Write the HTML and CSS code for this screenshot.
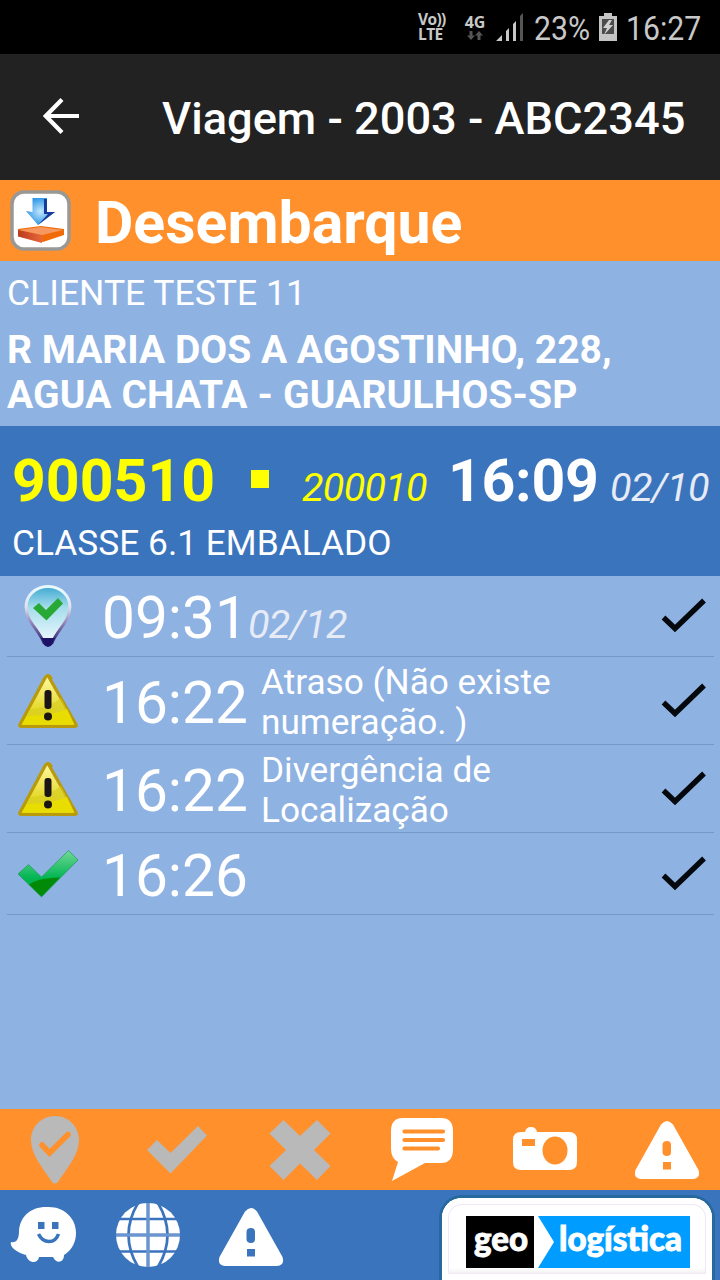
FILE: index.html
```html
<!DOCTYPE html>
<html lang="pt-BR">
<head>
    <meta charset="UTF-8">
    <meta name="viewport" content="width=device-width, initial-scale=1.0">
    <title>Viagem</title>
    <link rel="stylesheet" href="styles.css">
</head>
<body>
    <svg width="0" height="0" class="defs">
        <defs>
            <linearGradient id="yellow" x1="0" y1="0" x2="0" y2="1">
                <stop offset="0" stop-color="#fff9a8"/>
                <stop offset="0.6" stop-color="#e8dc35"/>
                <stop offset="1" stop-color="#e6d800"/>
            </linearGradient>
            <linearGradient id="green" x1="0" y1="0" x2="0" y2="1">
                <stop offset="0" stop-color="#72d896"/>
                <stop offset="0.6" stop-color="#00b552"/>
                <stop offset="1" stop-color="#0aa848"/>
            </linearGradient>
            <linearGradient id="pin" x1="0" y1="0" x2="0" y2="1">
                <stop offset="0" stop-color="#3fa9d0"/>
                <stop offset="0.35" stop-color="#a5dcec"/>
                <stop offset="1" stop-color="#f2fcff"/>
            </linearGradient>
            <linearGradient id="pin-edge" x1="0" y1="0" x2="0" y2="1">
                <stop offset="0" stop-color="#e8fbff"/>
                <stop offset="0.35" stop-color="#e2e0f2"/>
                <stop offset="0.75" stop-color="#6a5a9c"/>
                <stop offset="1" stop-color="#1c1266"/>
            </linearGradient>
            <radialGradient id="arrow">
                <stop offset="0" stop-color="#c4e8fd"/>
                <stop offset="1" stop-color="#3298e6"/>
            </radialGradient>
            <linearGradient id="box" x1="0" y1="0" x2="1" y2="0">
                <stop offset="0" stop-color="#b93c1c"/>
                <stop offset="1" stop-color="#e8663a"/>
            </linearGradient>
            <symbol id="warning" viewBox="0 0 62 56">
                <path d="M31 2.5 L59 51.5 Q60 53.5 57.5 53.5 H4.5 Q2 53.5 3 51.5 L28 5 Q31 0 34 5 Z" fill="url(#yellow)" stroke="#b99a0a" stroke-width="3.2" stroke-linejoin="round"/>
                <path d="M13 36 Q32 35 44 25 L54 44 L56 51 H5 Z" fill="#d5cc20" opacity="0.6"/>
                <path d="M5 51 L10 43 Q34 43 50 36 L57 51 Z" fill="#e9dd00"/>
                <rect x="27.5" y="17" width="7" height="19" rx="3" fill="#1a1412"/>
                <circle cx="31" cy="43.5" r="4" fill="#1a1412"/>
            </symbol>
            <symbol id="tick" viewBox="0 0 46 36">
                <path d="M2.5 19.5 L14 30.5 L43 2.5" fill="none" stroke="#05080c" stroke-width="5.4"/>
            </symbol>
            <symbol id="alert" viewBox="0 0 66 60">
                <path fill-rule="evenodd" fill="#fff" d="M27 4.5 Q33 -2.5 39 4.5 L64.5 50 Q67 58.5 59 59 H7 Q-1 58.5 1.5 50 Z M33 21 Q28.5 21 28.5 25 V32 Q28.5 36 33 36 Q37 36 37 32 V25 Q37 21 33 21 Z M29 42 V49.5 H37 V42 Z"/>
            </symbol>
        </defs>
    </svg>

    <div class="status-bar">
        <div class="volte"><span>Vo))</span><span>LTE</span></div>
        <div class="network">
            <span>4G</span>
            <svg width="16" height="9" viewBox="0 0 16 9" fill="#555"><path d="M2.5 0h3v4.5h2.5L4 9 0 4.5h2.5zM10.5 9h3V4.5H16L12 0 8 4.5h2.5z"/></svg>
        </div>
        <svg class="signal" width="28" height="28" viewBox="0 0 28 28">
            <path fill="#c8c8c8" d="M0 28 L6 22 V28 Z M10 18 L13 15 V28 H10 Z M17 11 L20 8 V28 H17 Z"/>
            <path fill="#555" d="M24 3 L27 0 V28 H24 Z"/>
        </svg>
        <span class="battery-text">23%</span>
        <svg class="battery" width="18" height="28" viewBox="0 0 18 28">
            <path fill="#c4c4c4" d="M5 0h8v3h5v25H0V3h5z"/>
            <path fill="#4b4b4b" d="M3 6h12v15H3z"/>
            <path fill="#d0d0d0" d="M10 7l-6 8h4l-3 7 9-10h-4l3-5z"/>
        </svg>
        <span class="clock">16:27</span>
    </div>

    <header>
        <svg class="back" width="36" height="36" viewBox="0 0 36 36" fill="none" stroke="#fff" stroke-width="4.2"><path d="M36 18H3M19 1.5L2.8 18 19 34.5"/></svg>
        <h1>Viagem - 2003 - ABC2345</h1>
    </header>

    <div class="activity">
        <svg width="62" height="62" viewBox="0 0 62 62">
            <rect x="2" y="2" width="57" height="57" rx="12" fill="#fff" stroke="#9a9894" stroke-width="3.5"/>
            <path d="M8 46 V39 L31 36 L54 39 V45 L33 52 Z" fill="#ee6b08"/>
            <path d="M8 40 L32 45 V53 L8 46.5 Z" fill="url(#box)"/>
            <path d="M9 40 L31 37 L53 40 L32 45 Z" fill="#f79860"/>
            <path d="M22.5 8 H37 V22 H45 L28 35 L16 21 L22.5 22 Z" fill="url(#arrow)"/>
            <path d="M34 9 H37 V22 H45 L28 35 L38 24 H34 Z" fill="#173b9c"/>
        </svg>
        <h2>Desembarque</h2>
    </div>

    <div class="client">
        <div class="client-name">CLIENTE TESTE 11</div>
        <div class="address">R MARIA DOS A AGOSTINHO, 228,<br><span class="city">AGUA CHATA - GUARULHOS-SP</span></div>
    </div>

    <div class="order">
        <div class="order-row">
            <span class="order-number">900510</span>
            <span class="square"></span>
            <span class="order-code">200010</span>
            <span class="order-time">16:09</span>
            <span class="order-date">02/10</span>
        </div>
        <div class="order-class">CLASSE 6.1 EMBALADO</div>
    </div>

    <main>
        <div class="event first">
            <div class="event-icon">
                <svg width="48" height="62" viewBox="0 0 48 62">
                    <path d="M24 1.5 C11 1.5 2 11 2 22 C2 36 15 45 20 58 Q24 63 28 58 C33 45 46 36 46 22 C46 11 37 1.5 24 1.5 Z" fill="url(#pin)" stroke="url(#pin-edge)" stroke-width="2.8"/>
                    <path d="M17 53 H31 L27 59.5 Q24 62.5 21 59.5 Z" fill="#1c1266"/>
                    <path d="M9 23 L15 18 L22 25 L34 13 L39 18.5 L22.5 35.5 Z" fill="#28a935"/>
                </svg>
            </div>
            <div class="event-time">09:31<em>02/12</em></div>
            <svg class="tick" width="46" height="36"><use href="#tick"/></svg>
        </div>
        <div class="event">
            <div class="event-icon"><svg width="62" height="56"><use href="#warning"/></svg></div>
            <div class="event-time">16:22</div>
            <div class="event-text">Atraso (Não existe<br>numeração. )</div>
            <svg class="tick" width="46" height="36"><use href="#tick"/></svg>
        </div>
        <div class="event">
            <div class="event-icon"><svg width="62" height="56"><use href="#warning"/></svg></div>
            <div class="event-time">16:22</div>
            <div class="event-text">Divergência de<br>Localização</div>
            <svg class="tick" width="46" height="36"><use href="#tick"/></svg>
        </div>
        <div class="event last">
            <div class="event-icon">
                <svg width="62" height="48" viewBox="0 0 62 48">
                    <path d="M1 24 L11.5 14.5 L24.5 27 L51.5 0.5 L61 10 L24.5 47 Z" fill="url(#green)" stroke="#2b9a66" stroke-width="0.8"/>
                    <path d="M12 34.5 Q20 28 43 27.5 L24.5 46.5 Z" fill="#008a08"/>
                </svg>
            </div>
            <div class="event-time">16:26</div>
            <svg class="tick" width="46" height="36"><use href="#tick"/></svg>
        </div>
    </main>

    <nav class="actions">
        <svg height="68" viewBox="0 0 48 68">
            <path fill="#b9b9b9" d="M24 0 C10 0 0 11 0 24 C0 39 12 52 21 66 Q24 69 27 66 C36 52 48 39 48 24 C48 11 38 0 24 0 Z"/>
            <path d="M11 29 L18.5 37 L37 18.5" fill="none" stroke="#ff902b" stroke-width="5.5" stroke-linecap="round"/>
        </svg>
        <svg class="check" height="48" viewBox="0 0 60 48" fill="#b9b9b9"><path d="M0 24 L10 14 L23.5 27 L51 0 L60 9.5 L23.5 47.5 Z"/></svg>
        <svg height="62" viewBox="0 0 62 62" fill="#b9b9b9"><path d="M14.5 1 L31 17 L48 1 L61.5 14.5 L45 31 L61.5 47 L48 61 L31 44.5 L14.5 61 L0.5 47 L17 31 L0.5 14.5 Z"/></svg>
        <svg height="64" viewBox="0 0 64 64">
            <path fill="#fff" d="M13 0 H51 Q63 0 63 13 V31 Q63 45 51 45 H35 L2 63 L8 44 Q1 40 1 31 V13 Q1 0 13 0 Z"/>
            <path stroke="#ff902b" stroke-width="4.2" stroke-linecap="round" d="M14.5 13.5H53M14.5 22H53M14.5 30.5H48"/>
        </svg>
        <svg class="camera" height="44" viewBox="0 0 64 44">
            <path fill="#fff" d="M8 5 H12 Q13 0 18 0 Q23 0 24 5 H56 Q64 5 64 13 V35 Q64 43 56 43 H8 Q0 43 0 35 V13 Q0 5 8 5 Z"/>
            <path fill="#ff902b" d="M9 12h13v7H9z"/>
            <ellipse cx="42" cy="23.5" rx="12.5" ry="14" fill="#ff902b"/>
        </svg>
        <svg height="60"><use href="#alert"/></svg>
    </nav>

    <footer>
        <svg class="waze" width="67" height="58" viewBox="0 0 67 58">
            <path fill="#fff" d="M39 1 C20 0 10 11 9 25 C9 34 6 37 1 36 C-1 42 9 47 16 49 C18 58 28 58 29 51 H43 C46 58 54 57 54 49 C62 44 66 36 66 27 C66 12 54 1 39 1 Z"/>
            <path fill="#3a74bd" d="M28 16h6.5v7H28zM42 16h6.5v7H42z"/>
            <path d="M28.5 28 Q32 35.500 39 35.500 Q46 35.500 48.5 28" fill="none" stroke="#3a74bd" stroke-width="3.5"/>
        </svg>
        <svg class="globe" width="64" height="64" viewBox="0 0 64 64">
            <circle cx="32" cy="32" r="32" fill="#fff"/>
            <g fill="none" stroke="#3a74bd" stroke-width="2.7">
                <path d="M3 16H61M3 48.5H61"/>
                <path d="M22 0 Q3 32 22 64 M42 0 Q61 32 42 64"/>
                <path stroke="#6b95d0" stroke-width="3.5" d="M32 0V64M0 32H64"/>
            </g>
        </svg>
        <svg class="alert" width="66" height="60"><use href="#alert"/></svg>
        <div class="logo">
            <svg width="224" height="53" viewBox="0 0 224 53">
                <path fill="#000" d="M0 0h68v52H0z"/>
                <path fill="#009cff" d="M72 0H224V52H72L88 26Z"/>
                <g class="logo-text">
                    <text x="8" y="35" textLength="54" lengthAdjust="spacingAndGlyphs">geo</text>
                    <text x="93" y="35" textLength="123" lengthAdjust="spacingAndGlyphs">logística</text>
                </g>
            </svg>
        </div>
    </footer>
</body>
</html>
```
FILE: styles.css
```css
* {
    box-sizing: border-box;
}
body {
    margin: 0;
    width: 720px;
    height: 1280px;
    overflow: hidden;
    display: flex;
    flex-direction: column;
    font-family: Roboto, sans-serif;
    background-color: #8eb2e2;
    color: #fff;
}
svg {
    display: block;
    flex-shrink: 0;
}
.defs {
    position: absolute;
}
.status-bar {
    height: 54px;
    flex-shrink: 0;
    background-color: #000;
    color: #c8c8c8;
    display: flex;
    align-items: center;
    padding-left: 418px;
}
.volte {
    display: flex;
    flex-direction: column;
    width: 46px;
    font: bold 15.5px/15px "Open Sans", sans-serif;
    letter-spacing: -0.6px;
}
.network {
    display: flex;
    flex-direction: column;
    align-items: center;
    width: 22px;
    font: bold 16px/17px "Open Sans", sans-serif;
}
.signal {
    margin-left: 10px;
}
.battery-text, .clock {
    font-size: 33.5px;
    line-height: 40px;
    padding-top: 3px;
    white-space: nowrap;
    transform: scaleX(0.9);
    transform-origin: left;
}
.battery-text {
    width: 54px;
    margin-left: 10px;
}
.battery {
    margin-left: 11px;
}
.clock {
    margin-left: 9px;
}
header {
    height: 126px;
    flex-shrink: 0;
    background-color: #222;
    display: flex;
    align-items: center;
    padding-left: 43px;
}
.back {
    margin-bottom: 3px;
}
h1 {
    margin: 0 0 0 83px;
    padding-top: 3px;
    font-size: 45.2px;
    font-weight: 500;
    white-space: nowrap;
}
.activity {
    height: 81px;
    flex-shrink: 0;
    background-color: #ff902b;
    display: flex;
    align-items: center;
    padding-left: 10px;
}
h2 {
    margin: 0 0 0 23px;
    padding-top: 4px;
    font-size: 59px;
    font-weight: bold;
}
.client {
    height: 165px;
    flex-shrink: 0;
    padding: 10px 7px 0;
}
.client-name {
    font-size: 35.5px;
    line-height: 44px;
}
.address {
    margin-top: 13px;
    font-size: 39px;
    font-weight: bold;
    line-height: 45px;
    white-space: nowrap;
}
.city {
    letter-spacing: 0.15px;
}
.order {
    height: 150px;
    flex-shrink: 0;
    background-color: #3a74bd;
    padding: 20px 0 0 12px;
}
.order-row {
    display: flex;
    align-items: baseline;
    line-height: 70px;
    white-space: nowrap;
}
.order-number, .order-time {
    font-size: 59px;
    font-weight: bold;
}
.order-number {
    width: 239px;
    color: #ff0;
}
.square {
    width: 18px;
    height: 18px;
    background-color: #ff0;
    margin-bottom: 13px;
    transform: translateY(-13px);
}
.order-code, .order-date {
    font-size: 39.5px;
    font-style: italic;
}
.order-code {
    width: 146px;
    margin-left: 33px;
    color: #ff0;
    letter-spacing: -0.7px;
}
.order-time {
    width: 162px;
    letter-spacing: -0.3px;
}
.order-date {
    color: #e6ebf6;
    letter-spacing: -0.6px;
}
.order-class {
    font-size: 35.3px;
    line-height: 40px;
}
main {
    flex: 1;
    padding: 0 6px 0 7px;
}
.event {
    height: 88px;
    border-bottom: 1px solid #7899c6;
    display: flex;
    align-items: center;
}
.event.first {
    height: 81px;
}
.event.last {
    height: 82px;
}
.event-icon {
    width: 81px;
    display: flex;
    justify-content: center;
}
.event-time {
    width: 158px;
    margin-left: 14px;
    padding-top: 5px;
    font-size: 58.6px;
    white-space: nowrap;
}
.first .event-time {
    padding-top: 3px;
}
.event-time em {
    font-size: 39.5px;
    letter-spacing: -0.6px;
    color: #e6ebf6;
}
.event-text {
    padding: 3px 0 0 1px;
    font-size: 35.2px;
    line-height: 40px;
}
.tick {
    margin-left: auto;
    margin-right: 7px;
}
.actions {
    height: 81px;
    flex-shrink: 0;
    background-color: #ff902b;
    display: flex;
    justify-content: space-between;
    align-items: center;
    padding: 0 20px 0 22px;
}
.actions svg {
    width: 66px;
}
.camera {
    margin-bottom: 2px;
}
footer {
    height: 90px;
    flex-shrink: 0;
    background-color: #3a74bd;
    display: flex;
    align-items: center;
    padding-left: 10px;
}
.globe {
    margin-left: 39px;
}
.alert {
    margin-left: 38px;
    margin-top: 3px;
}
.logo {
    width: 270px;
    height: 82px;
    align-self: flex-end;
    margin-left: 158px;
    border-radius: 20px 20px 0 0;
    background: linear-gradient(#fff 85%, #e2e2e2);
    box-shadow: 0 0 0 3px #25699e, inset 0 0 0 6px #fff, inset 0 0 0 7px #f0e8f6;
    padding: 18px 0 0 24px;
}
.logo-text {
    font-family: Lato, sans-serif;
    font-weight: 900;
    font-size: 34px;
    fill: #fff;
    stroke: #fff;
    stroke-width: 0.9px;
}
```
